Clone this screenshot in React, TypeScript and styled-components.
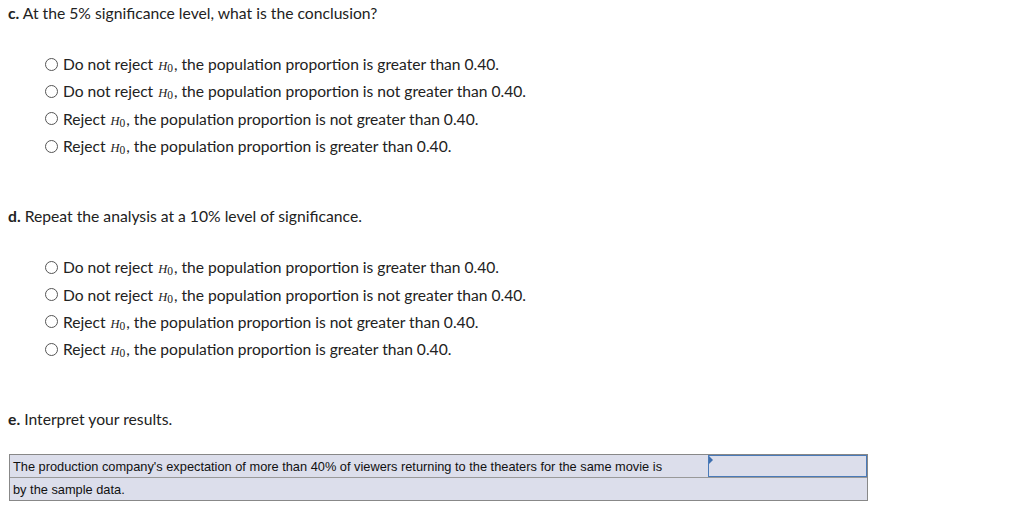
import styled, { createGlobalStyle } from "styled-components";

const GlobalStyle = createGlobalStyle`
  body {
    margin: 0;
    background: #fff;
    font-family: Lato, "Open Sans", sans-serif;
    color: #222;
  }
`;

const Page = styled.div`
  padding: 4px 8px 0 8px;
`;

const Section = styled.div`
  margin-bottom: 52px;
`;

const Prompt = styled.p`
  margin: 0;
  font-size: 15.7px;
  line-height: 18px;
`;

const Letter = styled.b`
  font-weight: 700;
`;

const Options = styled.div`
  display: flex;
  flex-direction: column;
  padding: 33px 0 0 37px;
  gap: 9.4px;
`;

const Option = styled.label`
  display: flex;
  align-items: center;
  gap: 5px;
  font-size: 15.6px;
  line-height: 18px;
  height: 18px;
`;

const Radio = styled.span`
  width: 13px;
  height: 13px;
  border: 1px solid #555;
  border-radius: 50%;
  box-sizing: border-box;
  flex-shrink: 0;
`;

const H = styled.i`
  font-family: "Liberation Serif", serif;
  font-size: 12.5px;
  line-height: 0;
  margin: 0 1px 0 5px;
`;

const Sub = styled.sub`
  font-style: normal;
  font-size: 11.5px;
  line-height: 0;
  vertical-align: -2px;
`;

const Table = styled.div`
  margin: 26px 0 0 1px;
  width: 857px;
  border: 1px solid #888;
  background: #dcdeeb;
  font-family: "Liberation Sans", Arial, sans-serif;
  font-size: 12.8px;
  color: #111;
`;

const Row = styled.div<{ $last?: boolean }>`
  display: flex;
  align-items: stretch;
  height: 22px;
  border-bottom: ${(p) => (p.$last ? "none" : "1px solid #999")};
`;

const Cell = styled.div`
  flex: 1;
  display: flex;
  align-items: center;
  padding-left: 3px;
`;

const Select = styled.div`
  position: relative;
  width: 157px;
  border: 1px solid #4a7ab8;
  margin-left: auto;
`;

const Caret = styled.span`
  position: absolute;
  top: 0;
  left: 0;
  width: 0;
  height: 0;
  border-top: 4px solid transparent;
  border-bottom: 4px solid transparent;
  border-left: 4px solid #3d6fb0;
`;

const choices = [
  ["Do not reject", "the population proportion is greater than 0.40."],
  ["Do not reject", "the population proportion is not greater than 0.40."],
  ["Reject", "the population proportion is not greater than 0.40."],
  ["Reject", "the population proportion is greater than 0.40."],
];

function ChoiceList() {
  return (
    <Options>
      {choices.map(([verb, rest], i) => (
        <Option key={i}>
          <Radio />
          <span>
            {verb}
            <H>
              H<Sub>0</Sub>
            </H>
            , {rest}
          </span>
        </Option>
      ))}
    </Options>
  );
}

export default function App() {
  return (
    <Page>
      <GlobalStyle />
      <Section>
        <Prompt>
          <Letter>c.</Letter> At the 5% significance level, what is the conclusion?
        </Prompt>
        <ChoiceList />
      </Section>
      <Section>
        <Prompt>
          <Letter>d.</Letter> Repeat the analysis at a 10% level of significance.
        </Prompt>
        <ChoiceList />
      </Section>
      <Prompt>
        <Letter>e.</Letter> Interpret your results.
      </Prompt>
      <Table>
        <Row>
          <Cell>
            The production company's expectation of more than 40% of viewers returning to the theaters for the same movie is
          </Cell>
          <Select>
            <Caret />
          </Select>
        </Row>
        <Row $last>
          <Cell>by the sample data.</Cell>
        </Row>
      </Table>
    </Page>
  );
}
